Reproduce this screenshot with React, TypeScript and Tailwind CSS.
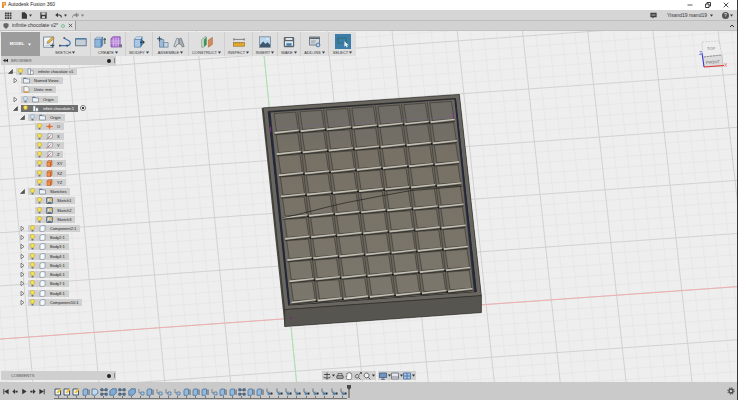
import type { ReactNode } from 'react';

type IconProps = { className?: string };
type Point = [number, number];

const Caret = () => (
    <svg viewBox="0 0 4 4" className="w-[3px] h-[3px] shrink-0" aria-hidden="true">
        <path d="M0 .5h4L2 3.5z" fill="currentColor" />
    </svg>
);

const Svg = ({ box = 12, className = 'size-3', children }: IconProps & { box?: number; children: ReactNode }) => (
    <svg viewBox={`0 0 ${box} ${box}`} className={`shrink-0 ${className}`} fill="none" aria-hidden="true">
        {children}
    </svg>
);

/* ---------- toolbar icons ---------- */

const SketchIcon = () => (
    <Svg>
        <rect x=".7" y="1" width="9.6" height="10.2" fill="#f3f5f7" stroke="#65788c" strokeWidth=".8" />
        <path d="M2.5 9.5 8 8.5M3 7.5l2-3" stroke="#8fa3b5" strokeWidth=".6" />
        <path d="m4.5 7.5.4-2L9.6.8l1.6 1.4-4.8 4.7z" fill="#f0b93a" stroke="#6e5a2c" strokeWidth=".5" />
        <path d="M9.3 7.5v4M7.3 9.5h4" stroke="#3d4b59" strokeWidth="1" />
    </Svg>
);

const LineIcon = () => (
    <Svg>
        <path d="M.8 9.6h7.4c2.4 0 3-1.4 3-2.8S10 4.6 8 3.8L5.4 2.2" stroke="#3f76ad" strokeWidth="1.1" />
        <path d="M0 8.8h1.6v1.6H0zM4.4 1.2H6v1.6H4.4zM7.4 8.8H9v1.6H7.4z" fill="#3b4a5a" />
    </Svg>
);

const RectIcon = () => (
    <Svg>
        <rect x=".6" y="2.8" width="10.6" height="7" fill="#c7cdd4" stroke="#4d657f" strokeWidth=".8" />
        <path d="M.6 2.8h10.6" stroke="#3f76ad" strokeWidth="1.2" />
    </Svg>
);

const ExtrudeIcon = () => (
    <Svg>
        <path d="m.8 3.2 2-2h6l-1.7 2z" fill="#cfe0f0" stroke="#48709a" strokeWidth=".5" />
        <path d="M.8 3.2h6.3v8H.8z" fill="#8fb7de" stroke="#48709a" strokeWidth=".6" />
        <path d="m7.1 3.2 1.7-2v7.9l-1.7 2.1z" fill="#5585b5" stroke="#48709a" strokeWidth=".5" />
        <path d="M10.8 8V2.8m-1.2 1.3 1.2-1.8L12 4.1" stroke="#26323e" strokeWidth=".8" />
    </Svg>
);

const FormIcon = () => (
    <Svg>
        <path d="M1 2.500 3 .8h7.200v8L8.500 11H1z" fill="#b57fd8" stroke="#7440a0" strokeWidth=".7" />
        <path d="M1 5h9.6M1 7.2h9.6M3.4 2v8.6M6 1.500V11M8.4 1.500v9" stroke="#ecd9f8" strokeWidth=".5" />
        <path d="M9 8.4h3v3H9z" fill="#7d6a8c" />
    </Svg>
);

const PressPullIcon = () => (
    <Svg>
        <path d="m1.4 3.4 2-2.6h6L7.7 3.4z" fill="#dbe8f4" stroke="#48709a" strokeWidth=".5" />
        <path d="M1.4 3.4h6.3v7.8H1.4z" fill="#a9c8e6" stroke="#48709a" strokeWidth=".6" />
        <path d="m7.7 3.4 1.7-2.6V9l-1.7 2.2z" fill="#316da5" />
        <path d="M7 6.2h4m-1.6-1.7 2 1.7-2 1.7" stroke="#1f2b37" strokeWidth="1" />
    </Svg>
);

const ComponentIcon = () => (
    <Svg>
        <path d="M2.500 3.500h4.200v7.700H2.500z" fill="#9dbad7" stroke="#4f6e8e" strokeWidth=".6" />
        <path d="M6.7 6.500h4.400v4.700H6.7z" fill="#c4d4e4" stroke="#4f6e8e" strokeWidth=".6" />
        <path d="M2.4.4v4.800M0 2.800h4.8" stroke="#39506a" strokeWidth="1.1" />
    </Svg>
);

const JointIcon = () => (
    <Svg>
        <path d="m.8 10.4 3-8.2 2 .6V8l-2 .6-1 2.4z" fill="#cfd3d8" stroke="#5d666f" strokeWidth=".6" />
        <path d="m11.2 10.4-3-8.2-2 .6V8l2 .6 1 2.4z" fill="#a7adb4" stroke="#5d666f" strokeWidth=".6" />
    </Svg>
);

const PlaneIcon = () => (
    <Svg>
        <path d="M.8 3.6 4 .8h1.4v8L2.4 11.2H.8z" fill="#d6e6d8" stroke="#547059" strokeWidth=".5" />
        <path d="m2.8 3.6 2.6-2.4v7.6l-2.6 2z" fill="#3f9553" />
        <path d="m7.4 4 4-2.6v7l-4 2.8z" fill="#d98a58" stroke="#9c5a33" strokeWidth=".5" />
    </Svg>
);

const MeasureIcon = () => (
    <Svg>
        <path d="M.6 3.4h10.8M.8 2.2v2.4M11.2 2.2v2.4" stroke="#565d64" strokeWidth=".7" />
        <rect x=".4" y="6.6" width="11.2" height="3.6" fill="#e6ab2e" stroke="#8d6a1f" strokeWidth=".6" />
        <path d="M2.5 6.6v1.6M4.5 6.6v1.6M6.5 6.6v1.6M8.5 6.6v1.6" stroke="#8d6a1f" strokeWidth=".4" />
    </Svg>
);

const InsertIcon = () => (
    <Svg>
        <rect x=".5" y=".8" width="11" height="10.6" fill="#bcd8ee" stroke="#78838d" strokeWidth=".8" />
        <path d="m1 9 3.2-3.4L6.4 8l2-1.8L11 8.6v2.3H1z" fill="#3d576e" />
        <path d="M6.5 3.2c1-1.2 3-1 3.6.4z" fill="#fff" />
    </Svg>
);

const MakeIcon = () => (
    <Svg>
        <rect x=".8" y="1" width="10.4" height="10.2" rx="1" fill="#5d646b" />
        <rect x="2.6" y="2" width="6.8" height="2" fill="#dfe3e6" />
        <rect x="2" y="5.2" width="8" height="4.6" fill="#dce6ee" />
        <path d="M3.4 7.2h5.2v2.6H3.4z" fill="#4a7fae" />
    </Svg>
);

const AddInsIcon = () => (
    <Svg>
        <rect x=".6" y="1" width="9.8" height="8" fill="#d5d9de" stroke="#5b6670" strokeWidth=".8" />
        <path d="M.6 2.2h9.8" stroke="#5b6670" strokeWidth="1.6" />
        <path d="M2 5h5M2 6.8h4" stroke="#818b95" strokeWidth=".7" />
        <circle cx="9" cy="9" r="1.9" fill="#c3d4e5" stroke="#4b79a6" strokeWidth="1" />
    </Svg>
);

const SelectIcon = () => (
    <span className="flex items-center justify-center bg-[#3d7da9] w-4 h-[15px]">
        <Svg>
            <rect x=".6" y="2" width="8.6" height="5" stroke="#2c6b54" strokeWidth=".9" strokeDasharray="1.6 .5" />
            <path d="M7.4 5.2v5.6l1.4-1.2.9 1.9 1-.5-.9-1.8h1.8z" fill="#f4f8fb" />
        </Svg>
    </span>
);

const toolGroups = [
    { label: 'SKETCH', width: 'w-[51px]', icons: [SketchIcon, LineIcon, RectIcon] },
    { label: 'CREATE', width: 'w-[35px]', icons: [ExtrudeIcon, FormIcon] },
    { label: 'MODIFY', width: 'w-[27px]', icons: [PressPullIcon] },
    { label: 'ASSEMBLE', width: 'w-9', icons: [ComponentIcon, JointIcon] },
    { label: 'CONSTRUCT', width: 'w-9', icons: [PlaneIcon] },
    { label: 'INSPECT', width: 'w-7', icons: [MeasureIcon] },
    { label: 'INSERT', width: 'w-[25px]', icons: [InsertIcon] },
    { label: 'MAKE', width: 'w-[23px]', icons: [MakeIcon] },
    { label: 'ADD-INS', width: 'w-7', icons: [AddInsIcon] },
    { label: 'SELECT', width: 'w-[27px]', icons: [SelectIcon] },
];

function Toolbar() {
    return (
        <div className="flex w-fit h-6 ml-px mt-px bg-[#dfdfdf]" role="toolbar">
            <button className="flex items-center justify-center gap-1 w-[39px] bg-[#9c9c9c] text-white text-[4px] font-bold">
                MODEL <Caret />
            </button>
            {toolGroups.map(({ label, width, icons }) => (
                <div key={label} className={`flex flex-col items-center justify-between pt-[2px] border-r border-[#cfcfcf] last:border-r-0 ${width}`}>
                    <div className="flex items-center gap-1 h-[15px]">
                        {icons.map((Icon, i) => (
                            <button key={i} aria-label={label} className="block">
                                <Icon />
                            </button>
                        ))}
                    </div>
                    <button className="flex items-center gap-px text-[4px] leading-[7px] text-[#3a3a3a] whitespace-nowrap">
                        {label} <Caret />
                    </button>
                </div>
            ))}
        </div>
    );
}

/* ---------- browser tree ---------- */

const Bulb = ({ off }: { off?: boolean }) => (
    <svg viewBox="0 0 5 7" className="w-[5px] h-[7px] shrink-0" aria-hidden="true">
        <path d="M2.5.4C1.2.4.5 1.3.5 2.4c0 1 .8 1.4 1 2.3h2c.2-.9 1-1.3 1-2.3 0-1.100-.7-2-2-2z" fill={off ? '#cfe0f2' : '#f7e250'} stroke={off ? '#6f8fb3' : '#b39a2a'} strokeWidth=".5" />
        <path d="M1.600 5h1.800v1.500H1.600z" fill="#6d7075" />
    </svg>
);

type NodeKind = 'folder' | 'doc' | 'component' | 'point' | 'axis' | 'plane' | 'sketch' | 'body';

const kindShapes: Record<NodeKind, ReactNode> = {
    folder: (
        <>
            <path d="M.5 1.200h2.500l.5.8h3v4h-6z" fill="#eef2f6" stroke="#66788c" strokeWidth=".6" />
            <path d="M.5 1.400h2.800" stroke="#3f5f86" strokeWidth=".8" />
        </>
    ),
    doc: (
        <>
            <path d="M1 .5h3.200L6 2.300v4.200H1z" fill="#f6f6f4" stroke="#7d7d7d" strokeWidth=".6" />
            <path d="M.8 5.200h4.400v1.500H.8z" fill="#df9b45" />
        </>
    ),
    component: (
        <>
            <path d="M1 .8h2.500v5.600H1z" fill="#f4f6f8" stroke="#6b7886" strokeWidth=".6" />
            <path d="M3.500 2.800h2.700v3.600H3.500z" fill="#fff" stroke="#6b7886" strokeWidth=".6" />
        </>
    ),
    point: (
        <>
            <path d="M3.500 1.200 6 3.500 3.500 5.800 1 3.500z" fill="#ef8a4c" />
            <path d="M0 3.500h7M3.500.5v6" stroke="#d2622a" strokeWidth=".6" />
        </>
    ),
    axis: (
        <>
            <path d="M2 .8h4.300v4.400H2z" fill="#f2f3f5" stroke="#7d858e" strokeWidth=".6" />
            <path d="M.5 6.400 4.800 2.300" stroke="#b94b43" strokeWidth=".7" />
        </>
    ),
    plane: <path d="M1 2h3.600v4.500H1zm0 0L2.200.7H6v4.400L4.600 6.500V2L6 .7" fill="#f0904e" stroke="#bb5d25" strokeWidth=".6" />,
    sketch: (
        <>
            <path d="M.8.8h5.400v5.500H.8z" fill="#dfe5ea" stroke="#27384a" strokeWidth=".8" />
            <path d="M2.500 3.700 5 .8l1.300.8-2.500 2.700z" fill="#e9bd36" />
            <path d="M2 5.300h3" stroke="#27384a" strokeWidth=".8" />
        </>
    ),
    body: <path d="M1 2 2.200.7H6v4.400L5 6.400H1z" fill="#f7f9fb" stroke="#6e8093" strokeWidth=".6" />,
};

type TreeNode = {
    label: string;
    indent: string;
    kind: NodeKind;
    arrow?: 'open' | 'closed';
    bulb?: 'on' | 'off';
    active?: boolean;
};

const tree: TreeNode[] = [
    { label: 'infinite chocolate v1', indent: 'pl-2', kind: 'component', arrow: 'open', bulb: 'on' },
    { label: 'Named Views', indent: 'pl-[13px]', kind: 'folder', arrow: 'closed' },
    { label: 'Units: mm', indent: 'pl-[13px]', kind: 'doc' },
    { label: 'Origin', indent: 'pl-[13px]', kind: 'folder', arrow: 'closed', bulb: 'off' },
    { label: 'infinit chocolate:1', indent: 'pl-[13px]', kind: 'component', arrow: 'open', bulb: 'on', active: true },
    { label: 'Origin', indent: 'pl-5', kind: 'folder', arrow: 'open', bulb: 'off' },
    { label: 'O', indent: 'pl-[27px]', kind: 'point', bulb: 'on' },
    { label: 'X', indent: 'pl-[27px]', kind: 'axis', bulb: 'on' },
    { label: 'Y', indent: 'pl-[27px]', kind: 'axis', bulb: 'on' },
    { label: 'Z', indent: 'pl-[27px]', kind: 'axis', bulb: 'on' },
    { label: 'XY', indent: 'pl-[27px]', kind: 'plane', bulb: 'on' },
    { label: 'XZ', indent: 'pl-[27px]', kind: 'plane', bulb: 'on' },
    { label: 'YZ', indent: 'pl-[27px]', kind: 'plane', bulb: 'on' },
    { label: 'Sketches', indent: 'pl-5', kind: 'folder', arrow: 'open', bulb: 'on' },
    { label: 'Sketch1', indent: 'pl-[27px]', kind: 'sketch', bulb: 'on' },
    { label: 'Sketch2', indent: 'pl-[27px]', kind: 'sketch', bulb: 'on' },
    { label: 'Sketch3', indent: 'pl-[27px]', kind: 'sketch', bulb: 'on' },
    { label: 'Component2:1', indent: 'pl-5', kind: 'body', arrow: 'closed', bulb: 'on' },
    { label: 'Body2:1', indent: 'pl-5', kind: 'body', arrow: 'closed', bulb: 'on' },
    { label: 'Body3:1', indent: 'pl-5', kind: 'body', arrow: 'closed', bulb: 'on' },
    { label: 'Body4:1', indent: 'pl-5', kind: 'body', arrow: 'closed', bulb: 'on' },
    { label: 'Body5:1', indent: 'pl-5', kind: 'body', arrow: 'closed', bulb: 'on' },
    { label: 'Body6:1', indent: 'pl-5', kind: 'body', arrow: 'closed', bulb: 'on' },
    { label: 'Body7:1', indent: 'pl-5', kind: 'body', arrow: 'closed', bulb: 'on' },
    { label: 'Body8:1', indent: 'pl-5', kind: 'body', arrow: 'closed', bulb: 'on' },
    { label: 'Component10:1', indent: 'pl-5', kind: 'body', arrow: 'closed', bulb: 'on' },
];

function TreeRow({ node }: { node: TreeNode }) {
    return (
        <li className={`flex items-center h-[7px] ${node.indent}`}>
            <span className="w-[5px] mr-[3px]">
                {node.arrow && (
                    <button aria-label={`Toggle ${node.label}`} className="block">
                        <Svg box={5} className="size-[5px]">
                            {node.arrow === 'open' ? (
                                <path d="M4.500.5v4H.5z" fill="#555" stroke="#333" strokeWidth=".5" />
                            ) : (
                                <path d="M1 .3 4 2.500 1 4.700z" fill="#fff" stroke="#333" strokeWidth=".6" />
                            )}
                        </Svg>
                    </button>
                )}
            </span>
            <span className={`flex items-center gap-1 h-[7px] pl-[2px] pr-1 text-[4px] leading-[7px] whitespace-nowrap ${node.active ? 'bg-[#707070] text-white' : 'bg-[#d0d0d0] text-[#222]'}`}>
                {node.bulb && <Bulb off={node.bulb === 'off'} />}
                <Svg box={7} className="size-[7px]">{kindShapes[node.kind]}</Svg>
                {node.label}
            </span>
            {node.active && (
                <input type="radio" defaultChecked aria-label="Activate component" className="appearance-none ml-[2px] size-[6px] rounded-full border border-[#777] bg-white bg-[radial-gradient(#333_1px,transparent_1px)]" />
            )}
        </li>
    );
}

const PanelHeader = ({ title, collapse }: { title: string; collapse?: boolean }) => (
    <div className="flex items-center w-[115px] h-[9px] ml-px pl-[2px] pr-px bg-[#cfcfcf] text-[4px] text-[#555]">
        <span className="w-2">
            {collapse && (
                <Svg box={6} className="size-[5px]">
                    <path d="M3 1v4L0 3zM6 1v4L3 3z" fill="#222" />
                </Svg>
            )}
        </span>
        <h2>{title}</h2>
        <button aria-label={`${title} options`} className="ml-auto mr-[3px] size-1 rounded-full bg-[#222]"></button>
        <span className="w-px h-[5px] bg-[#888]"></span>
    </div>
);

/* ---------- 3D scene ---------- */

const gridSteps = Array.from({ length: 86 }, (_, i) => i - 31);

// corners of the pocket floor: top-left, top-right, bottom-right, bottom-left
const floor: Point[] = [[272, 112], [454, 99.500], [474, 290], [291, 303]];
const COLS = 7;
const ROWS = 9;

function at(u: number, v: number): Point {
    const [a, b, c, d] = floor;
    const mix = (i: 0 | 1) => (a[i] * (1 - u) + b[i] * u) * (1 - v) + (d[i] * (1 - u) + c[i] * u) * v;
    return [mix(0), mix(1)];
}

const pts = (...list: Point[]) => list.map(([x, y]) => `${x.toFixed(2)},${y.toFixed(2)}`).join(' ');

function Chocolate() {
    const cells = [];
    for (let r = 0; r < ROWS; r++) {
        for (let c = 0; c < COLS; c++) {
            const q = (x: number, y: number) => at((c + x) / COLS, (r + y) / ROWS);
            const [nx, ny] = q(1, 0.98);
            cells.push(
                <g key={`${r}-${c}`}>
                    <polygon points={pts(q(0.09, 0.04), q(0.92, 0.04), q(0.95, 0.88), q(0.12, 0.88))} fill="url(#square)" stroke="#2b2925" strokeWidth=".5" />
                    <polygon points={pts(q(0.04, 0.91), q(0.97, 0.87), q(0.97, 0.93), q(0.04, 0.99))} fill="#c4c1b6" />
                    <polyline points={pts(q(0.03, 1.03), q(0.97, 0.99))} stroke="#1c1b18" strokeWidth=".7" />
                    {c > 0 && <polyline points={pts(q(0, 0), q(0.01, 1))} stroke="#2b2925" strokeWidth=".5" />}
                    {c < COLS - 1 && <circle cx={nx} cy={ny} r="1" fill="#121110" />}
                </g>
            );
        }
    }
    return (
        <g>
            <polygon points="262,107 460,93.500 482,295 482,312 285,326" fill="#4a4946" />
            <polygon points="263.500,107 460,93.500 482,295 285,309" fill="#68665f" stroke="#2b2a27" strokeWidth=".6" />
            <polygon points="285,309 482,295 482,312 285,326" fill="#575550" stroke="#2b2a27" strokeWidth=".6" />
            <polygon points="268.500,110.500 456,97.500 477,291 289,304.500" fill="#2f3138" stroke="#17171a" strokeWidth=".6" />
            <polygon points="271,111.500 455,98.500 474.500,291 290.500,304" fill="#6c685f" />
            <path d="m456 98 20.500 193M269.500 112l20 191" stroke="#1f2640" strokeWidth="1.200" />
            {cells}
            <polyline points="283,217 297,214 325,207 346,202 380,195.500 410,190 463,185.500" stroke="#23211e" strokeWidth=".7" />
            <path d="M273 127 453 116" stroke="#77608c" strokeWidth=".4" />
            <path d="M271 126v5M454 112v5" stroke="#81308a" strokeWidth="1" />
            <circle cx="291.500" cy="317.500" r="1.200" fill="#763569" />
        </g>
    );
}

function Scene() {
    return (
        <svg viewBox="0 30 738 352" preserveAspectRatio="xMinYMin slice" className="absolute inset-0 size-full" fill="none" role="img" aria-label="Chocolate mould model">
            <defs>
                <linearGradient id="square" gradientUnits="userSpaceOnUse" x1="0" y1="100" x2="0" y2="305">
                    <stop offset="0" stopColor="#6d6b66" />
                    <stop offset=".25" stopColor="#767065" />
                    <stop offset="1" stopColor="#7c776c" />
                </linearGradient>
            </defs>
            {gridSteps.map((i) => {
                const major = i % 5 === 0;
                const k = i / 5;
                return (
                    <g key={i} stroke={major ? '#cecece' : '#e2e2e2'} strokeWidth={major ? 0.9 : 0.6}>
                        <path d={`M${262 + 65.3 * k} 30 ${297 + 66 * k} 382`} />
                        <path d={`M0 ${338.5 - 53.2 * k} 738 ${286 - 53.2 * k}`} />
                    </g>
                );
            })}
            <path d="M0 338.500 738 286" stroke="#f2aaaa" strokeWidth=".9" />
            <path d="m262 30 35 352" stroke="#a4e6a8" strokeWidth=".9" />
            <Chocolate />
        </svg>
    );
}

const ViewCube = () => (
    <svg viewBox="0 0 38 32" className="absolute top-2 right-[3px] w-[38px] h-8" fill="none" role="img" aria-label="View cube">
        <path d="m6 3 17-1 3 14-19 2z" fill="#ededed" stroke="#b5b5b5" strokeWidth=".5" strokeDasharray="2 1" />
        <path d="m7 18 19-2 1 11-19 1z" fill="#dcdcdc" stroke="#aaa" strokeWidth=".5" />
        <path d="m8 18 17-2" stroke="#777" strokeWidth=".6" strokeDasharray="2 1" />
        <path d="M6 14l2 14" stroke="#3034d0" strokeWidth="1" />
        <path d="m8 28 20-1.500" stroke="#e03434" strokeWidth="1.200" />
        <g fontSize="4" fontFamily="Liberation Sans">
            <text x="11" y="11" fill="#777">TOP</text>
            <text x="10" y="25" fill="#666" transform="rotate(-4 10 25)">FRONT</text>
            <text x="28" y="28" fontSize="5" fill="#ef5a5a">X</text>
            <text x="3" y="16" fontSize="5" fill="#5a60e0">Z</text>
        </g>
    </svg>
);

/* ---------- navigation bar ---------- */

const navShapes: { name: string; menu?: boolean; shape: ReactNode }[] = [
    { name: 'Orbit', menu: true, shape: <path d="M4 .5v7M1 2.500h6M.5 5c1.500 1.500 5.500 1.500 7 0" stroke="#444" strokeWidth=".9" /> },
    { name: 'Look at', shape: <path d="M1 3.500h6v3H1zM2 3.500v-2h4v2M0 5h8" stroke="#555" strokeWidth=".8" /> },
    { name: 'Pan', shape: <path d="M2 7.500.8 4.500l1 .2V1.500h1V1h1V.6h1V1h1v.7h.9V6l-.8 1.500z" fill="#fafafa" stroke="#555" strokeWidth=".6" /> },
    { name: 'Zoom', shape: <path d="M3 2.500a1.800 1.800 0 1 0 .1 0M4.500 5.500l2 2M5 2.500 7.500.5M6 .5h1.500V2" stroke="#444" strokeWidth=".8" /> },
    { name: 'Fit', menu: true, shape: <path d="M3.500 1a2.400 2.400 0 1 0 .1 0M5.300 5.300l2 2.200" fill="#eef3f7" stroke="#444" strokeWidth=".8" /> },
];

const displayShapes: { name: string; shape: ReactNode }[] = [
    { name: 'Display settings', shape: <path d="M.5 1h7v4.500h-7zM2 7.300h4M4 5.500v2" fill="#6f95c4" stroke="#415a7c" strokeWidth=".8" /> },
    { name: 'Grid and snaps', shape: <path d="M.5 1h7v6h-7zM.5 5h7" fill="#e4e7ea" stroke="#666e77" strokeWidth=".8" /> },
    { name: 'Viewports', shape: <path d="M.5 1h7v6h-7zM4 1v6M.5 4h7" fill="#a9c5e6" stroke="#416a9c" strokeWidth=".8" /> },
];

const NavButton = ({ name, menu, shape }: { name: string; menu?: boolean; shape: ReactNode }) => (
    <button aria-label={name} className="flex items-center gap-px text-[#333]">
        <Svg box={8} className="size-2">{shape}</Svg>
        {menu && <Caret />}
    </button>
);

/* ---------- timeline ---------- */

type FeatureKind = 'S' | 'E' | 'R' | 'P' | 'F' | 'J' | 'A';

const features = [...'SSSERPFPFJEJJJEEEJEEPEEAAAAAAAAA'] as FeatureKind[];

const featureShapes: Record<FeatureKind, ReactNode> = {
    S: (
        <>
            <path d="M1 1h5.500v6H1z" fill="#f1f4f6" stroke="#31475e" strokeWidth=".9" />
            <path d="M2.500 4.500 6 .5l1.500 1-3.500 4z" fill="#f0bd2e" />
        </>
    ),
    E: (
        <>
            <path d="m1 2 1-1h3.500v5l-1 1.300H1z" fill="#94b9de" stroke="#41688f" strokeWidth=".7" />
            <path d="M7 7V1.500" stroke="#34404c" strokeWidth=".8" />
        </>
    ),
    R: <path d="M1 7V1h3.500C6.500 1.500 7 3 7 5L4 7.300z" fill="#c3d9ee" stroke="#486e96" strokeWidth=".8" />,
    P: <path d="M.8.8h2v2h-2zM5.200.8h2v2h-2zM.8 5.200h2v2h-2zM5.200 5.200h2v2h-2zM3 2h2M3 6h2" fill="#6d9bc9" stroke="#263c54" strokeWidth=".7" />,
    F: <path d="M.8 3 3 .8h4.300v4L5 7.200H.8z" fill="#7fabd8" stroke="#3d638b" strokeWidth=".7" />,
    J: (
        <>
            <path d="M2 1v4h2.500" stroke="#7d8790" strokeWidth="1" />
            <path d="M4 4h3v3H4z" fill="#b2cde8" stroke="#486e96" strokeWidth=".7" />
        </>
    ),
    A: (
        <>
            <path d="M2 .5v3.500l3 2" stroke="#6a747d" strokeWidth="1" />
            <path d="M4 3.500v3.800M2.500 6h3" stroke="#2e73b3" strokeWidth=".8" />
            <path d="M5.500 4.500h2v2h-2z" fill="#232b33" />
        </>
    ),
};

const transport = [
    { name: 'Go to start', d: 'M1 1h1v6H1zM7 1v6L2 4z' },
    { name: 'Step back', d: 'M4 1.200v5.600L1 4zM4.500 3h2.500v2H4.500z' },
    { name: 'Play', d: 'M2 .8 7 4 2 7.200z' },
    { name: 'Step forward', d: 'M4 1.200v5.600L7 4zM1 3h2.500v2H1z' },
    { name: 'Go to end', d: 'M6 1h1v6H6zM1 1v6l5-3z' },
];

const Gear = ({ className }: IconProps) => (
    <Svg box={8} className={className}>
        <circle cx="4" cy="4" r="2" stroke="#444" strokeWidth="1.300" />
        <circle cx="4" cy="4" r="3.200" stroke="#444" strokeWidth="1" strokeDasharray="1.200 1.300" />
    </Svg>
);

function Timeline() {
    return (
        <footer className="flex items-center h-[18px] pl-[2px] pr-[2px] bg-[#cacaca]">
            <div className="flex gap-px mr-2 text-[#333]">
                {transport.map(({ name, d }) => (
                    <button key={name} aria-label={name}>
                        <Svg box={8} className="w-2 h-[7px]">
                            <path d={d} fill="currentColor" />
                        </Svg>
                    </button>
                ))}
            </div>
            <ol className="flex justify-between w-[293px] mt-1 border-b border-[#777]">
                {features.map((kind, i) => (
                    <li key={i} className="flex flex-col items-center">
                        <Svg box={8} className="size-2">{featureShapes[kind]}</Svg>
                        <span className="w-px h-[2px] bg-[#777]"></span>
                    </li>
                ))}
            </ol>
            <svg viewBox="0 0 4 13" className="w-1 h-[13px] shrink-0" aria-hidden="true">
                <path d="M0 0h4v3L2.500 4.500V13h-1V4.500L0 3z" fill="#4a4a4a" />
            </svg>
            <button aria-label="Timeline settings" className="ml-auto">
                <Gear className="size-2" />
            </button>
        </footer>
    );
}

/* ---------- window chrome ---------- */

const TitleBar = () => (
    <header className="flex items-center h-[10px] pl-px pr-2 bg-white text-[5px] text-[#222]">
        <Svg box={6} className="size-[6px] mr-px">
            <path d="M1 0h4v3.500H3V6H1z" fill="#e69138" />
            <path d="M2.500 1.200h1.300v1H2.500z" fill="#fff" />
        </Svg>
        <h1>Autodesk Fusion 360</h1>
        <div className="flex items-center gap-3 ml-auto">
            <button aria-label="Minimize"><Svg box={6} className="size-[6px]"><path d="M.5 3h5" stroke="#333" strokeWidth=".8" /></Svg></button>
            <button aria-label="Restore"><Svg box={6} className="size-[6px]"><path d="M.6 2h3.400v3.500H.6zM2 2V.5h3.500V4H4" stroke="#222" strokeWidth=".9" /></Svg></button>
            <button aria-label="Close"><Svg box={6} className="size-[6px]"><path d="m.7.7 4.600 4.600M5.300.7.7 5.300" stroke="#222" strokeWidth=".8" /></Svg></button>
        </div>
    </header>
);

const QuickBar = () => (
    <div className="flex items-center h-[10px] pl-1 pr-1 bg-[#d6d6d6] text-[#3a3a3a]">
        <button aria-label="Data panel" className="mr-[9px]">
            <Svg box={8} className="w-2 h-[7px]">
                <path d="M.5.5h2v2h-2zM3.200.5h2v2h-2zM5.900.5h2v2h-2zM.5 3.200h2v2h-2zM3.200 3.200h2v2h-2zM5.900 3.200h2v2h-2zM.5 5.900h2v2h-2zM3.200 5.900h2v2h-2zM5.900 5.900h2v2h-2z" fill="currentColor" />
            </Svg>
        </button>
        <button aria-label="File" className="flex items-center gap-px mr-2">
            <Svg box={7} className="size-[7px]"><path d="M.8.3h3L6 2.500v4.200H.8z" fill="currentColor" /></Svg>
            <Caret />
        </button>
        <button aria-label="Save" className="mr-2">
            <Svg box={7} className="size-[7px]">
                <path d="M.3.3h6.400v6.400H.3z" fill="currentColor" />
                <path d="M1.500.6h4v2.200h-4zM2 4.300h3v2H2z" fill="#d6d6d6" />
            </Svg>
        </button>
        <button aria-label="Undo" className="flex items-center gap-[2px] mr-[5px]">
            <Svg box={7} className="size-[7px]">
                <path d="M2.500 3h2C6 3 6.300 4 6.300 5.500" stroke="currentColor" strokeWidth="1.100" />
                <path d="M3 .8v4.400L.2 3z" fill="currentColor" />
            </Svg>
            <Caret />
        </button>
        <button aria-label="Redo" className="flex items-center gap-[2px] text-[#777]">
            <Svg box={7} className="size-[7px]"><path d="M5.500 3h-3C1 3 .5 4 .5 5.500M2 3h3M4.400 1.200v3.600L6.800 3z" stroke="currentColor" strokeWidth=".8" /></Svg>
            <Caret />
        </button>
        <button aria-label="Notifications" className="ml-auto mr-[10px]">
            <Svg box={7} className="size-[7px]">
                <path d="M.4.8h6.200v4.400H4L2.500 6.600V5.200H.4z" fill="currentColor" />
                <path d="M1.500 2.300h4M1.500 3.600h4" stroke="#d6d6d6" strokeWidth=".5" />
            </Svg>
        </button>
        <button className="flex items-center gap-[3px] mr-[9px] text-[5px] leading-[7px]">
            Yisand19 rsand19 <Caret />
        </button>
        <button aria-label="Help" className="flex items-center gap-px">
            <span className="flex items-center justify-center size-[7px] rounded-full bg-[#555] text-[5px] leading-[7px] text-white">?</span>
            <Caret />
        </button>
    </div>
);

const TabBar = () => (
    <nav className="flex h-[10px] pr-[2px] bg-[#d2d2d2] border-t border-[#bcbcbc]">
        <div className="flex items-center w-[76px] pl-[3px] pr-[2px] bg-[#dedede] border-r border-[#999] text-[5px] leading-[7px] text-[#333] whitespace-nowrap">
            <Svg box={7} className="size-[6px] mr-[3px]"><path d="M.5.8 3.500 0l3 .8v3.400L3.500 7l-3-2.800z" fill="#666" /></Svg>
            <a href="#design">infinite chocolate v2*</a>
            <span className="ml-auto mr-[3px] size-1 shrink-0 rounded-full border border-[#7cc39a]"></span>
            <button aria-label="Close tab"><Svg box={6} className="size-[5px]"><path d="m1 1 4 4M5 1 1 5" stroke="#444" /></Svg></button>
        </div>
        <button aria-label="Collapse" className="ml-auto">
            <Svg box={6} className="size-[6px]"><path d="m1 4 2-2 2 2" stroke="#333" /></Svg>
        </button>
    </nav>
);

export default function App() {
    return (
        <div className="flex flex-col min-h-screen border-r border-[#3a3438] bg-[#eeeeee] font-['Liberation_Sans',sans-serif]">
            <TitleBar />
            <QuickBar />
            <TabBar />
            <main className="relative flex-1 flex flex-col border-t border-[#c2c2c2] overflow-hidden">
                <Scene />
                <div className="relative flex-1 flex flex-col">
                    <Toolbar />
                    <aside>
                        <PanelHeader title="BROWSER" collapse />
                        <ul className="flex flex-col justify-between h-[238px] mt-[3px]">
                            {tree.map((node, i) => <TreeRow key={i} node={node} />)}
                        </ul>
                    </aside>
                    <div className="grid grid-cols-[1fr_auto_1fr] items-center mt-auto pb-[2px]">
                        <PanelHeader title="COMMENTS" />
                        <div className="flex gap-[2px]">
                            <div className="flex items-center gap-px h-[9px] px-px bg-[#d0d0d0]">
                                {navShapes.map((item) => <NavButton key={item.name} {...item} />)}
                            </div>
                            <div className="flex items-center h-[9px] px-px bg-[#d0d0d0]">
                                {displayShapes.map((item) => <NavButton key={item.name} menu {...item} />)}
                            </div>
                        </div>
                    </div>
                </div>
                <ViewCube />
            </main>
            <Timeline />
        </div>
    );
}
